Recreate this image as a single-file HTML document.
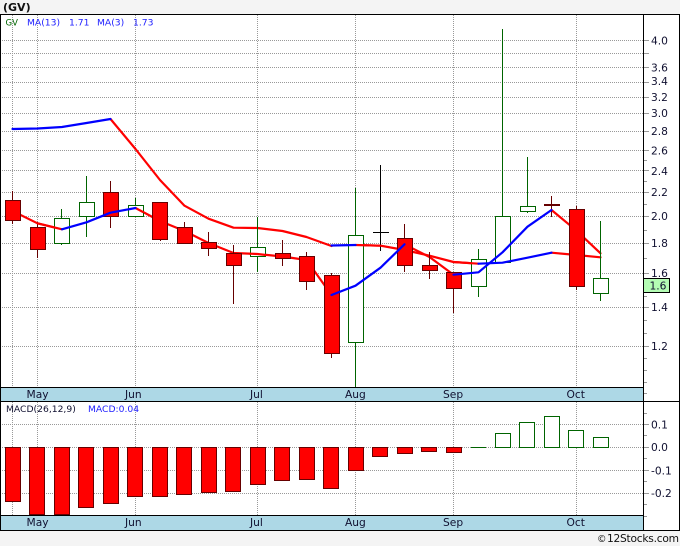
<!DOCTYPE html>
<html><head><meta charset="utf-8"><style>
html,body{margin:0;padding:0;background:#f4f4f4;width:680px;height:546px;overflow:hidden}
svg{display:block;position:absolute;left:0;top:0}
text{font-family:"DejaVu Sans","Liberation Sans",sans-serif;font-size:10.67px;fill:#101030}
.s{font-size:9.2px}
.g line{stroke:#999;stroke-width:1;stroke-dasharray:1 1;shape-rendering:crispEdges}
.t line{stroke:#999;stroke-width:1;shape-rendering:crispEdges}
.r rect{fill:#f00;stroke:#660000;stroke-width:1;shape-rendering:crispEdges}
.h rect{fill:#fff;stroke:#006400;stroke-width:1;shape-rendering:crispEdges}
.wr line{stroke:#660000;stroke-width:1;shape-rendering:crispEdges}
.wg line{stroke:#006400;stroke-width:1;shape-rendering:crispEdges}
.k line{stroke:#000;stroke-width:1;shape-rendering:crispEdges}
polyline{fill:none;stroke-width:2.2;stroke-linejoin:round;stroke-linecap:round}
</style></head><body>
<svg width="680" height="546" viewBox="0 0 680 546" xmlns="http://www.w3.org/2000/svg">
<rect x="0" y="14" width="680" height="516" fill="#fff"/>
<rect x="1" y="388" width="642" height="13" fill="#add8e6"/>
<rect x="1" y="516" width="642" height="14" fill="#add8e6"/>

<g class="g">
<line x1="2" x2="643" y1="40.5" y2="40.5"/><line x1="2" x2="643" y1="53.5" y2="53.5"/><line x1="2" x2="643" y1="67.5" y2="67.5"/><line x1="2" x2="643" y1="82.5" y2="82.5"/><line x1="2" x2="643" y1="97.5" y2="97.5"/><line x1="2" x2="643" y1="113.5" y2="113.5"/><line x1="2" x2="643" y1="131.5" y2="131.5"/><line x1="2" x2="643" y1="150.5" y2="150.5"/><line x1="2" x2="643" y1="170.5" y2="170.5"/><line x1="2" x2="643" y1="192.5" y2="192.5"/><line x1="2" x2="643" y1="216.5" y2="216.5"/><line x1="2" x2="643" y1="243.5" y2="243.5"/><line x1="2" x2="643" y1="273.5" y2="273.5"/><line x1="2" x2="643" y1="307.5" y2="307.5"/><line x1="2" x2="643" y1="346.5" y2="346.5"/>
<line x1="12.5" x2="12.5" y1="15" y2="387"/><line x1="37.5" x2="37.5" y1="15" y2="387"/><line x1="135.5" x2="135.5" y1="15" y2="387"/><line x1="257.5" x2="257.5" y1="15" y2="387"/><line x1="355.5" x2="355.5" y1="15" y2="387"/><line x1="453.5" x2="453.5" y1="15" y2="387"/><line x1="576.5" x2="576.5" y1="15" y2="387"/>
<line x1="2" x2="643" y1="424.5" y2="424.5"/><line x1="2" x2="643" y1="447.5" y2="447.5"/><line x1="2" x2="643" y1="470.5" y2="470.5"/><line x1="2" x2="643" y1="493.5" y2="493.5"/>
<line x1="12.5" x2="12.5" y1="402" y2="515"/><line x1="37.5" x2="37.5" y1="402" y2="515"/><line x1="135.5" x2="135.5" y1="402" y2="515"/><line x1="257.5" x2="257.5" y1="402" y2="515"/><line x1="355.5" x2="355.5" y1="402" y2="515"/><line x1="453.5" x2="453.5" y1="402" y2="515"/><line x1="576.5" x2="576.5" y1="402" y2="515"/>
</g>

<g class="t">
<line x1="644" x2="649" y1="40.5" y2="40.5"/><line x1="644" x2="649" y1="53.5" y2="53.5"/><line x1="644" x2="649" y1="67.5" y2="67.5"/><line x1="644" x2="649" y1="82.5" y2="82.5"/><line x1="644" x2="649" y1="97.5" y2="97.5"/><line x1="644" x2="649" y1="113.5" y2="113.5"/><line x1="644" x2="649" y1="131.5" y2="131.5"/><line x1="644" x2="649" y1="150.5" y2="150.5"/><line x1="644" x2="647" y1="160.5" y2="160.5"/><line x1="644" x2="649" y1="170.5" y2="170.5"/><line x1="644" x2="647" y1="181.5" y2="181.5"/><line x1="644" x2="649" y1="192.5" y2="192.5"/><line x1="644" x2="647" y1="204.5" y2="204.5"/><line x1="644" x2="649" y1="216.5" y2="216.5"/><line x1="644" x2="647" y1="230.5" y2="230.5"/><line x1="644" x2="649" y1="243.5" y2="243.5"/><line x1="644" x2="647" y1="258.5" y2="258.5"/><line x1="644" x2="649" y1="273.5" y2="273.5"/><line x1="644" x2="647" y1="296.5" y2="296.5"/><line x1="644" x2="649" y1="307.5" y2="307.5"/><line x1="644" x2="647" y1="320.5" y2="320.5"/><line x1="644" x2="647" y1="333.5" y2="333.5"/><line x1="644" x2="649" y1="346.5" y2="346.5"/><line x1="644" x2="647" y1="358.5" y2="358.5"/><line x1="644" x2="647" y1="370.5" y2="370.5"/><line x1="644" x2="647" y1="382.5" y2="382.5"/><line x1="644" x2="647" y1="393.5" y2="393.5"/>
<line x1="644" x2="647" y1="413.5" y2="413.5"/><line x1="644" x2="649" y1="424.5" y2="424.5"/><line x1="644" x2="647" y1="435.5" y2="435.5"/><line x1="644" x2="649" y1="447.5" y2="447.5"/><line x1="644" x2="647" y1="458.5" y2="458.5"/><line x1="644" x2="649" y1="470.5" y2="470.5"/><line x1="644" x2="647" y1="481.5" y2="481.5"/><line x1="644" x2="649" y1="493.5" y2="493.5"/><line x1="644" x2="647" y1="504.5" y2="504.5"/><line x1="644" x2="647" y1="516.5" y2="516.5"/>
</g>

<!-- red MA segments under candles -->
<g stroke="#ff0000">
<polyline points="110.5,119 135.5,149 160,180 184.5,205.7 208.5,218.7 233.5,227.7 257.5,228 282.5,231 306.5,237 331.5,246"/>
<polyline points="355.5,245 380.5,245.7 404.5,250 429.5,255.7 453.5,262 478.5,263.7"/>
<polyline points="551.5,252.7 576.5,255 600.5,257.3"/>
<polyline points="12.5,211 37.5,223.3 62,229.3"/>
<polyline points="135.5,208 160,221 184.5,231 208.5,243 233.5,253 257.5,254 282.5,256.5 306.5,260 331.5,295"/>
<polyline points="404.5,244.3 429.5,257 453.5,274.7"/>
<polyline points="551.5,210 576.5,230.7 600.5,253.3"/>
</g>

<!-- wicks -->
<g class="wr">
<line x1="12.5" x2="12.5" y1="191" y2="224"/><line x1="37.5" x2="37.5" y1="222" y2="258"/><line x1="110.5" x2="110.5" y1="181" y2="228"/><line x1="160.5" x2="160.5" y1="202" y2="241"/><line x1="184.5" x2="184.5" y1="222" y2="243"/><line x1="208.5" x2="208.5" y1="232" y2="256"/><line x1="233.5" x2="233.5" y1="245" y2="304"/><line x1="282.5" x2="282.5" y1="240" y2="266"/><line x1="306.5" x2="306.5" y1="252" y2="290"/><line x1="331.5" x2="331.5" y1="273" y2="358"/><line x1="404.5" x2="404.5" y1="224" y2="272"/><line x1="429.5" x2="429.5" y1="252" y2="279"/><line x1="453.5" x2="453.5" y1="272" y2="313"/><line x1="551.5" x2="551.5" y1="196" y2="217"/><line x1="576.5" x2="576.5" y1="206" y2="290"/>
</g>
<line x1="544" x2="560" y1="205" y2="205" stroke="#660000" stroke-width="2" shape-rendering="crispEdges"/>
<g class="wg">
<line x1="61.5" x2="61.5" y1="209" y2="245"/><line x1="86.5" x2="86.5" y1="176" y2="237"/><line x1="135.5" x2="135.5" y1="198" y2="217"/><line x1="257.5" x2="257.5" y1="217" y2="272"/><line x1="355.5" x2="355.5" y1="188" y2="387"/><line x1="478.5" x2="478.5" y1="249" y2="297"/><line x1="502.5" x2="502.5" y1="29" y2="262"/><line x1="527.5" x2="527.5" y1="157" y2="213"/><line x1="600.5" x2="600.5" y1="221" y2="301"/>
</g>
<g class="k"><line x1="380.5" x2="380.5" y1="165" y2="251"/><line x1="373" x2="389" y1="232.5" y2="232.5"/></g>

<g class="h">
<rect x="54.5" y="218.5" width="15" height="25"/><rect x="79.5" y="202.5" width="15" height="14"/><rect x="128.5" y="205.5" width="15" height="11"/><rect x="250.5" y="247.5" width="15" height="9"/><rect x="348.5" y="235.5" width="15" height="107"/><rect x="471.5" y="259.5" width="15" height="27"/><rect x="495.5" y="216.5" width="15" height="46"/><rect x="520.5" y="206.5" width="15" height="5"/><rect x="593.5" y="278.5" width="15" height="15"/>
</g>
<g class="r">
<rect x="5.5" y="200.5" width="15" height="20"/><rect x="30.5" y="227.5" width="15" height="22"/><rect x="103.5" y="192.5" width="15" height="24"/><rect x="152.5" y="202.5" width="15" height="37"/><rect x="177.5" y="227.5" width="15" height="16"/><rect x="201.5" y="242.5" width="15" height="6"/><rect x="226.5" y="253.5" width="15" height="12"/><rect x="275.5" y="253.5" width="15" height="5"/><rect x="299.5" y="256.5" width="15" height="25"/><rect x="324.5" y="275.5" width="15" height="78"/><rect x="397.5" y="238.5" width="15" height="27"/><rect x="422.5" y="265.5" width="15" height="5"/><rect x="446.5" y="272.5" width="15" height="16"/><rect x="569.5" y="209.5" width="15" height="77"/>
</g>

<!-- red over hollow + blue MA on top -->
<g stroke="#ff0000">
<polyline points="37.5,223.3 62,229.3"/>
<polyline points="135.5,208 143,212"/>
<polyline points="355.5,245 380.5,245.7"/>
<polyline points="250,253.7 257.5,254 266,255"/>
<polyline points="453.5,262 478.5,263.7"/>
</g>
<g stroke="#0000ff">
<polyline points="12.5,129 37.5,128.5 62,127 86.5,123 110.5,119"/>
<polyline points="331.5,245.5 355.5,245"/>
<polyline points="478.5,263.7 502.5,262.7 527.5,257.7 551.5,252.7"/>
<polyline points="62,229.3 86.5,222.3 110.5,212.7 135.5,208"/>
<polyline points="331.5,295 355.5,285.7 380.5,267.7 404.5,244.3"/>
<polyline points="453.5,274.7 478.5,272.3 502.5,252.3 527.5,226.7 551.5,210"/>
</g>

<!-- MACD bars -->
<g class="r">
<rect x="5.5" y="447.5" width="15" height="54"/><rect x="29.5" y="447.5" width="15" height="67"/><rect x="54.5" y="447.5" width="15" height="67"/><rect x="78.5" y="447.5" width="15" height="60"/><rect x="103.5" y="447.5" width="15" height="56"/><rect x="127.5" y="447.5" width="15" height="49"/><rect x="152.5" y="447.5" width="15" height="49"/><rect x="176.5" y="447.5" width="15" height="47"/><rect x="201.5" y="447.5" width="15" height="45"/><rect x="225.5" y="447.5" width="15" height="44"/><rect x="250.5" y="447.5" width="15" height="37"/><rect x="274.5" y="447.5" width="15" height="33"/><rect x="299.5" y="447.5" width="15" height="32"/><rect x="323.5" y="447.5" width="15" height="41"/><rect x="348.5" y="447.5" width="15" height="23"/><rect x="372.5" y="447.5" width="15" height="9"/><rect x="397.5" y="447.5" width="15" height="6"/><rect x="421.5" y="447.5" width="15" height="4"/><rect x="446.5" y="447.5" width="15" height="5"/>
</g>
<g class="h">
<rect x="495.5" y="433.5" width="15" height="14"/><rect x="519.5" y="422.5" width="15" height="25"/><rect x="544.5" y="416.5" width="15" height="31"/><rect x="568.5" y="430.5" width="15" height="17"/><rect x="593.5" y="437.5" width="15" height="10"/>
</g>
<line x1="471" x2="486" y1="447.5" y2="447.5" stroke="#006400" shape-rendering="crispEdges"/>

<!-- frame -->
<g class="k">
<line x1="0" x2="680" y1="14.5" y2="14.5"/>
<line x1="0.5" x2="0.5" y1="14" y2="530"/>
<line x1="679.5" x2="679.5" y1="14" y2="530"/>
<line x1="643.5" x2="643.5" y1="14" y2="530"/>
<line x1="0" x2="643" y1="387.5" y2="387.5"/>
<line x1="0" x2="680" y1="401.5" y2="401.5"/>
<line x1="0" x2="643" y1="515.5" y2="515.5"/>
<line x1="0" x2="680" y1="530.5" y2="530.5"/>
</g>

<!-- price box -->
<rect x="643.5" y="278.5" width="26" height="14" fill="#b4fcb4" stroke="#000" shape-rendering="crispEdges"/>

<!-- text -->
<text x="3" y="11" style="font-weight:bold;font-size:11px;fill:#111">(GV)</text>
<text x="5.5" y="25.5" class="s" style="fill:#006400;font-size:8.5px">GV</text>
<text x="27" y="25.5" class="s" style="fill:#2020ff">MA(13)</text>
<text x="69" y="25.5" class="s" style="fill:#2020ff">1.71</text>
<text x="97" y="25.5" class="s" style="fill:#2020ff">MA(3)</text>
<text x="133" y="25.5" class="s" style="fill:#2020ff">1.73</text>

<text x="651" y="44.5">4.0</text><text x="651" y="71.5">3.6</text><text x="651" y="85">3.4</text><text x="651" y="101">3.2</text><text x="651" y="117">3.0</text><text x="651" y="135">2.8</text><text x="651" y="154.5">2.6</text><text x="651" y="175">2.4</text><text x="651" y="196">2.2</text><text x="651" y="220">2.0</text><text x="651" y="247">1.8</text><text x="651" y="277">1.6</text><text x="649.5" y="289.5">1.6</text><text x="651" y="311">1.4</text><text x="651" y="350">1.2</text>

<text x="26.5" y="398">May</text><text x="125" y="398">Jun</text><text x="250" y="398">Jul</text><text x="345" y="398">Aug</text><text x="443" y="398">Sep</text><text x="566.5" y="398">Oct</text>

<text x="6" y="412" class="s">MACD(26,12,9)</text>
<text x="88" y="412" class="s" style="fill:#2020ff">MACD:0.04</text>

<text x="651" y="428.5">0.1</text><text x="651" y="451">0.0</text><text x="651" y="474.5">-0.1</text><text x="651" y="497">-0.2</text>

<text x="26.5" y="526">May</text><text x="125" y="526">Jun</text><text x="250" y="526">Jul</text><text x="345" y="526">Aug</text><text x="443" y="526">Sep</text><text x="566.5" y="526">Oct</text>

<text x="597" y="542" style="fill:#111;font-size:9.5px">©</text>
<text x="607" y="542" textLength="72" lengthAdjust="spacing" style="fill:#111">12Stocks.com</text>
</svg>
</body></html>
